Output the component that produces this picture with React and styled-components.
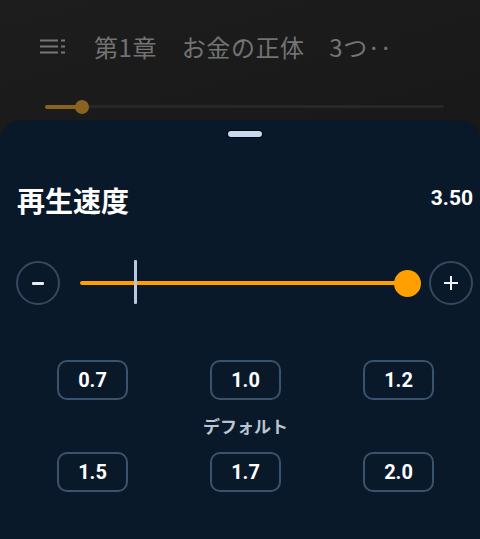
import React from 'react';
import styled, { createGlobalStyle } from 'styled-components';

const MIN_RATE = 0.5;
const MAX_RATE = 3.5;
const DEFAULT_RATE = 1.0;
const PRESETS = ['0.7', '1.0', '1.2', '1.5', '1.7', '2.0'];

const GlobalStyle = createGlobalStyle`
  html, body {
    margin: 0;
    padding: 0;
    background: #151515;
  }
  body {
    font-family: Roboto, "Noto Sans CJK JP", sans-serif;
  }
`;

function ListIcon() {
  return (
    <svg width="26" height="15" viewBox="0 0 26 15" fill="none" stroke="#767676" strokeWidth="2">
      <path d="M0 1.5h18M0 7.5h18M0 13.5h18" />
      <path d="M21 1.5h4M21 7.5h4M21 13.5h4" />
    </svg>
  );
}

export default function App() {
  const rate = 3.5;
  const tickPos = ((DEFAULT_RATE - MIN_RATE) / (MAX_RATE - MIN_RATE)) * 100;
  const fillPos = ((rate - MIN_RATE) / (MAX_RATE - MIN_RATE)) * 100;

  return (
    <Page>
      <GlobalStyle />
      <Player>
        <TopBar>
          <ListIcon />
          <ChapterTitle>第1章　お金の正体　3つ‥</ChapterTitle>
        </TopBar>
        <Progress>
          <ProgressFill style={{ width: '37px' }} />
        </Progress>
      </Player>

      <Sheet>
        <Handle />
        <SheetHeader>
          <SheetTitle>再生速度</SheetTitle>
          <RateValue>{rate.toFixed(2)}</RateValue>
        </SheetHeader>

        <SliderRow>
          <RoundButton aria-label="slower">
            <Minus />
          </RoundButton>
          <SliderArea>
            <Track>
              <TrackFill style={{ width: `${fillPos}%` }} />
              <Tick style={{ left: `${tickPos}%` }} />
              <Knob style={{ left: `${fillPos}%` }} />
            </Track>
          </SliderArea>
          <RoundButton aria-label="faster">
            <Plus />
          </RoundButton>
        </SliderRow>

        <Presets>
          {PRESETS.slice(0, 3).map(p => (
            <Preset key={p}>{p}</Preset>
          ))}
          <DefaultLabel>デフォルト</DefaultLabel>
          {PRESETS.slice(3).map(p => (
            <Preset key={p}>{p}</Preset>
          ))}
        </Presets>
      </Sheet>
    </Page>
  );
}

const Page = styled.div`
  display: flex;
  flex-direction: column;
  height: 539px;
  overflow: hidden;
  background: linear-gradient(165deg, #1d1d1d 0%, #161616 60%, #121212 100%);
`;

const Player = styled.div`
  height: 120px;
  display: flex;
  flex-direction: column;
`;

const TopBar = styled.div`
  display: flex;
  align-items: center;
  gap: 28px;
  height: 32px;
  margin-top: 30px;
  padding-left: 40px;
`;

const ChapterTitle = styled.div`
  font-family: "Noto Sans CJK JP", Roboto, sans-serif;
  font-size: 24px;
  color: #737373;
  white-space: nowrap;
  letter-spacing: 0.6px;
`;

const Progress = styled.div`
  position: relative;
  margin: 43px 36px 0 45px;
  height: 3px;
  border-radius: 2px;
  background: #272727;
`;

const ProgressFill = styled.div`
  position: relative;
  height: 4px;
  margin-top: -0.5px;
  border-radius: 2px;
  background: #8a6322;

  &::after {
    content: '';
    position: absolute;
    right: -7px;
    top: -5px;
    width: 14px;
    height: 14px;
    border-radius: 50%;
    background: #8a6322;
  }
`;

const Sheet = styled.div`
  flex: 1;
  display: flex;
  flex-direction: column;
  padding: 11px 7px 0 16px;
  border-radius: 20px 20px 0 0;
  background: #0a1929;
`;

const Handle = styled.div`
  align-self: center;
  width: 34px;
  height: 6px;
  border-radius: 3px;
  background: #c7d8f2;
  box-shadow: 0 0 0 1px #02060c;
`;

const SheetHeader = styled.div`
  display: flex;
  align-items: center;
  justify-content: space-between;
  margin-top: 45px;
  padding-left: 1px;
`;

const SheetTitle = styled.h2`
  margin: 0;
  font-family: "Noto Sans CJK JP", sans-serif;
  font-size: 28px;
  line-height: 36px;
  font-weight: 700;
  color: #ffffff;
`;

const RateValue = styled.div`
  font-family: Roboto, sans-serif;
  font-size: 21px;
  font-weight: 700;
  color: #ffffff;
  margin-top: -4px;
`;

const SliderRow = styled.div`
  display: flex;
  align-items: center;
  margin-top: 43px;
`;

const RoundButton = styled.button`
  position: relative;
  flex: none;
  width: 44px;
  height: 44px;
  padding: 0;
  border: 2px solid #34495f;
  border-radius: 50%;
  background: transparent;
  display: flex;
  align-items: center;
  justify-content: center;
`;

const Minus = styled.span`
  width: 12px;
  height: 3px;
  border-radius: 1px;
  background: #e6ecf3;
`;

const Plus = styled.span`
  position: relative;
  width: 14px;
  height: 14px;

  &::before,
  &::after {
    content: '';
    position: absolute;
    background: #f2f5f8;
  }
  &::before {
    left: 0;
    top: 6px;
    width: 14px;
    height: 2px;
  }
  &::after {
    left: 6px;
    top: 0;
    width: 2px;
    height: 14px;
  }
`;

const SliderArea = styled.div`
  flex: 1;
  margin: 0 22px 0 20px;
`;

const Track = styled.div`
  position: relative;
  height: 4px;
`;

const TrackFill = styled.div`
  height: 4px;
  border-radius: 2px;
  background: #ffa000;
`;

const Tick = styled.div`
  position: absolute;
  top: -21px;
  width: 3px;
  height: 44px;
  margin-left: -1px;
  border-radius: 1px;
  background: #b7c9de;
`;

const Knob = styled.div`
  position: absolute;
  top: -11.5px;
  width: 27px;
  height: 27px;
  margin-left: -13.5px;
  border-radius: 50%;
  background: #ffa000;
`;

const Presets = styled.div`
  display: grid;
  grid-template-columns: repeat(3, 153px);
  justify-items: center;
  row-gap: 16px;
  margin-top: 55px;
`;

const Preset = styled.button`
  height: 40px;
  padding: 0 19px;
  border: 2px solid #3a526c;
  border-radius: 10px;
  background: transparent;
  font-family: Roboto, sans-serif;
  font-size: 20px;
  font-weight: 700;
  color: #ffffff;
`;

const DefaultLabel = styled.div`
  grid-column: 1 / -1;
  justify-self: center;
  font-family: "Noto Sans CJK JP", sans-serif;
  font-size: 17px;
  line-height: 20px;
  font-weight: 700;
  color: #b9c5d3;
`;
